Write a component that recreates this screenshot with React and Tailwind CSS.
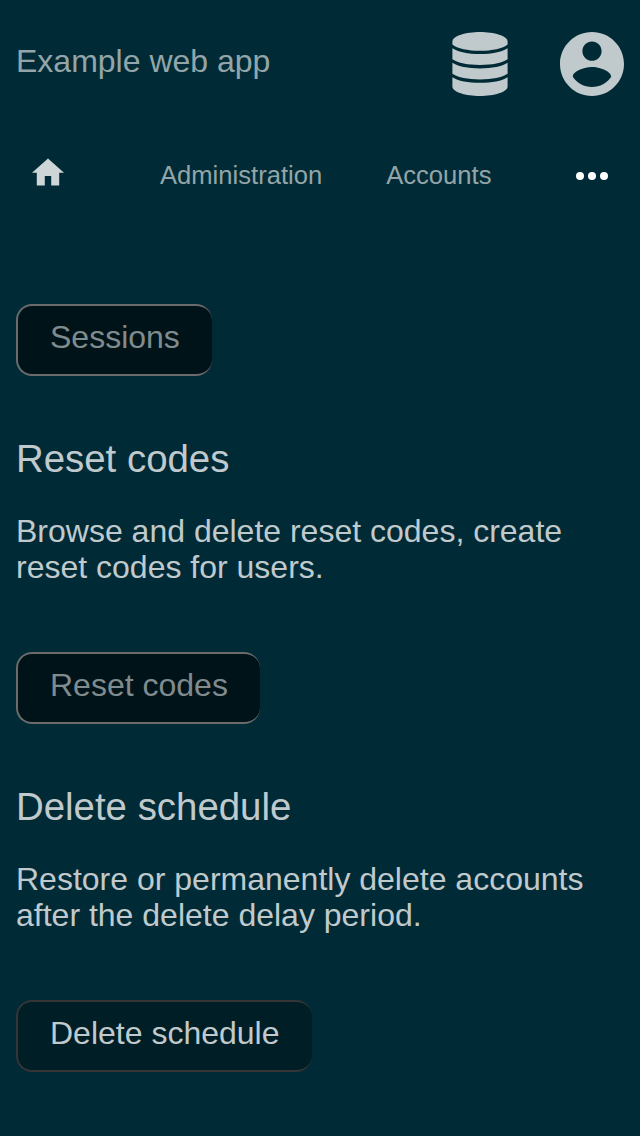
import React from "react";

function Section({ title, text, button }) {
  return (
    <section className="flex flex-col items-start">
      <h2 className="mt-[60px] text-[38.4px] leading-[46px] text-[#c0cacd]">{title}</h2>
      <p className="mt-[31px] text-[32px] leading-[36px] text-[#c0cacd]">
        {text[0]}
        <br />
        {text[1]}
      </p>
      {button}
    </section>
  );
}

const dim = "h-[72px] rounded-[16px] border-2 border-r-0 border-[#6b6b6b] bg-[#001318] text-[32px] leading-[60px] pl-8 pb-1.5 text-left text-[#808b8e]";
const active = "h-[72px] rounded-[16px] border-2 border-r-0 border-[#353535] bg-[#001e25] text-[32px] leading-[60px] pl-8 pb-1.5 text-left text-[#c0cacd]";

function DatabaseIcon() {
  return (
    <svg className="mr-[52px] h-16 w-14" viewBox="0 0 56 64" fill="#c0cacd">
      <path d="M28 0C42 0 55.6 4 55.6 9.5V12.5C51 16.5 40 18.8 28 18.8S5 16.5.4 12.5V9.5C.4 4 14 0 28 0z" />
      <path d="M.4 16.2C6 20 16 22.1 28 22.1S50 20 55.6 16.2V27.3C50 31 40 33 28 33S6 31 .4 27.3z" />
      <path d="M.4 30.7C6 34.4 16 36.4 28 36.4S50 34.4 55.6 30.7V41.7C50 45.4 40 47.4 28 47.4S6 45.4 .4 41.7z" />
      <path d="M.4 45.2C6 48.9 16 50.8 28 50.8S50 48.9 55.6 45.2V54.5C55.6 60 42 64 28 64S.4 60 .4 54.5z" />
    </svg>
  );
}

function AccountIcon() {
  return (
    <svg className="h-16 w-16" viewBox="2 2 20 20" fill="#c0cacd">
      <path d="M12 2C6.48 2 2 6.48 2 12s4.48 10 10 10 10-4.48 10-10S17.52 2 12 2zm0 3c1.66 0 3 1.34 3 3s-1.34 3-3 3-3-1.34-3-3 1.34-3 3-3zm0 14.2c-2.5 0-4.71-1.28-6-3.22.03-1.99 4-3.08 6-3.08 1.99 0 5.97 1.09 6 3.08-1.29 1.94-3.5 3.22-6 3.22z" />
    </svg>
  );
}

export default function App() {
  return (
    <div className="h-[1136px] w-[640px] overflow-hidden bg-[#002b36] px-4 font-['Liberation_Sans',Arial,sans-serif] whitespace-nowrap">
      <header className="flex h-32 items-center">
        <h1 className="mr-auto pb-1.5 text-[32px] leading-9 text-[#93a5a8]">Example web app</h1>
        <DatabaseIcon />
        <AccountIcon />
      </header>
      <nav className="flex h-24 items-center px-4 text-[25.6px] text-[#93a5a8]">
        <svg className="mb-2 h-8 w-8" viewBox="2 1.5 20 20" fill="#cdd5d7">
          <path d="M10 20v-6h4v6h5v-8h3L12 3 2 12h3v8z" />
        </svg>
        <span className="ml-24 pb-0.5">Administration</span>
        <span className="ml-16 pb-0.5">Accounts</span>
        <svg className="ml-auto h-2 w-8" viewBox="0 0 32 8" fill="#fff">
          <circle cx="4" cy="4" r="4" />
          <circle cx="16" cy="4" r="4" />
          <circle cx="28" cy="4" r="4" />
        </svg>
      </nav>
      <main className="pt-20">
        <button className={dim + " w-[196px]"}>Sessions</button>
        <Section title="Reset codes" text={["Browse and delete reset codes, create", "reset codes for users."]} button={<button className={dim + " mt-[67px] w-[244px]"}>Reset codes</button>} />
        <Section title="Delete schedule" text={["Restore or permanently delete accounts", "after the delete delay period."]} button={<button className={active + " mt-[67px] w-[296px]"}>Delete schedule</button>} />
      </main>
    </div>
  );
}
